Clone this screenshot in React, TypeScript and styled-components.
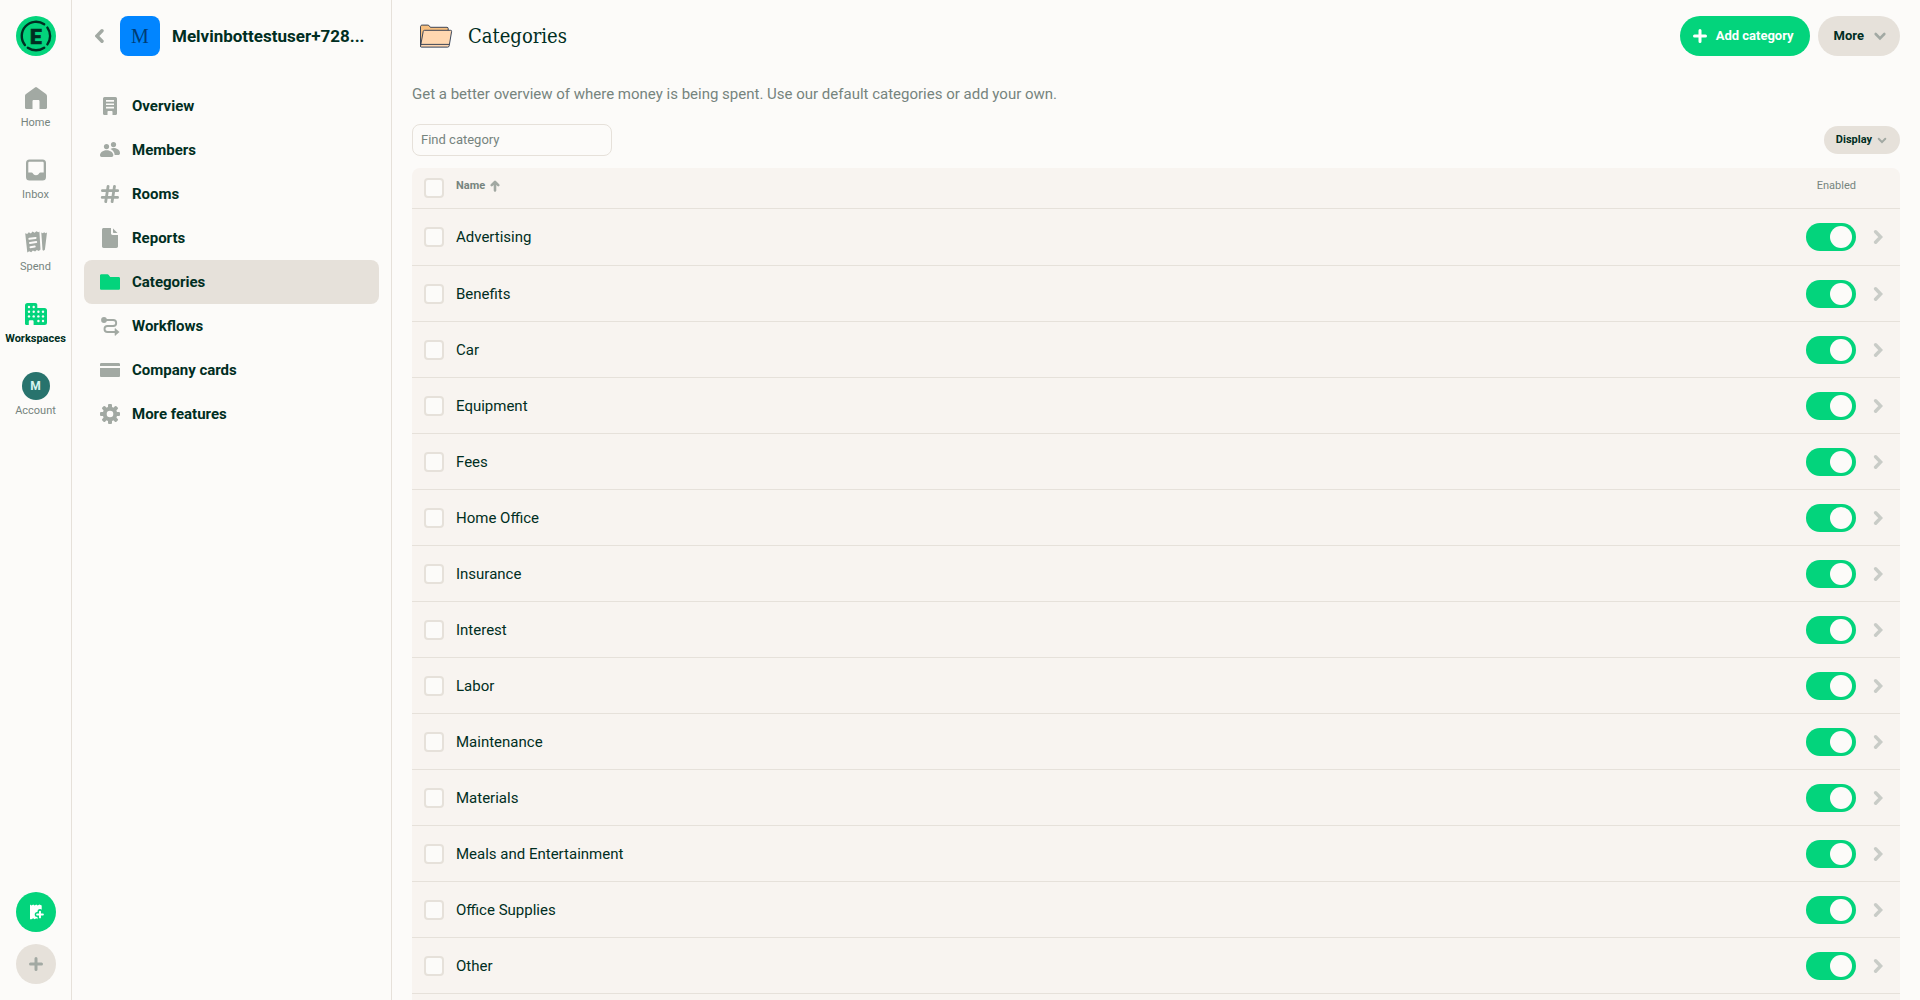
import React from "react";
import styled, { createGlobalStyle } from "styled-components";

const color = {
  app: "#fcfbf9",
  panel: "#f8f4f0",
  border: "#e6e1da",
  text: "#002e22",
  muted: "#76847e",
  icon: "#a2a9a3",
  green: "#03d47c",
};

const GlobalStyle = createGlobalStyle`
  *, *::before, *::after { box-sizing: border-box; }
  body {
    margin: 0;
    background: ${color.app};
    color: ${color.text};
    font-family: Roboto, "Liberation Sans", sans-serif;
    font-size: 15px;
    line-height: 20px;
  }
  a { color: inherit; text-decoration: none; }
  button, input { font: inherit; color: inherit; }
  button { border: 0; padding: 0; background: none; cursor: pointer; }
  svg { display: block; flex: none; }
`;

const Page = styled.div`
  display: flex;
  height: 100vh;
  overflow: hidden;
`;

/* Navigation rail */
const Rail = styled.nav`
  display: flex;
  flex-direction: column;
  align-items: center;
  flex: none;
  width: 72px;
  padding: 16px 0;
  border-right: 1px solid ${color.border};
`;

const RailTabs = styled.div`
  display: flex;
  flex-direction: column;
  flex: 1;
  align-self: stretch;
  padding-top: 16px;
`;

const RailTab = styled.a<{ $active?: boolean }>`
  display: flex;
  flex-direction: column;
  align-items: center;
  gap: 3px;
  height: 72px;
  padding-top: 12px;
  font-size: 11px;
  line-height: 16px;
  font-weight: ${(p) => (p.$active ? 700 : 400)};
  color: ${(p) => (p.$active ? color.text : color.muted)};
`;

const RailIcon = styled.span<{ $active?: boolean }>`
  display: flex;
  align-items: center;
  justify-content: center;
  height: 28px;
  color: ${(p) => (p.$active ? color.green : color.icon)};
`;

const UserAvatar = styled.span`
  display: flex;
  align-items: center;
  justify-content: center;
  width: 28px;
  height: 28px;
  border-radius: 50%;
  background: #28736d;
  color: #d6f5f0;
  font-size: 12px;
  font-weight: 700;
`;

const RailActions = styled.div`
  display: flex;
  flex-direction: column;
  gap: 12px;
`;

const RoundButton = styled.button<{ $primary?: boolean }>`
  display: flex;
  align-items: center;
  justify-content: center;
  width: 40px;
  height: 40px;
  border-radius: 50%;
  background: ${(p) => (p.$primary ? color.green : color.border)};
  color: ${(p) => (p.$primary ? "#fff" : color.icon)};
`;

/* Workspace sidebar */
const Sidebar = styled.aside`
  flex: none;
  width: 320px;
  border-right: 1px solid ${color.border};
`;

const SidebarHeader = styled.header`
  display: flex;
  align-items: center;
  gap: 12px;
  height: 72px;
  padding: 0 24px 0 20px;
`;

const BackButton = styled.button`
  display: flex;
  align-items: center;
  justify-content: center;
  flex: none;
  width: 16px;
  height: 40px;
  color: ${color.icon};
`;

const WorkspaceAvatar = styled.span`
  display: flex;
  align-items: center;
  justify-content: center;
  flex: none;
  width: 40px;
  height: 40px;
  border-radius: 8px;
  background: #0185ff;
  color: #003c73;
  font-family: "Liberation Serif", serif;
  font-size: 20px;
`;

const WorkspaceName = styled.span`
  font-size: 17px;
  font-weight: 700;
  white-space: nowrap;
`;

const Menu = styled.nav`
  display: flex;
  flex-direction: column;
  padding: 12px;
`;

const MenuItem = styled.a<{ $active?: boolean }>`
  display: flex;
  align-items: center;
  gap: 12px;
  height: 44px;
  padding: 0 16px;
  border-radius: 8px;
  font-weight: 700;
  background: ${(p) => (p.$active ? color.border : "transparent")};

  svg { color: ${(p) => (p.$active ? color.green : color.icon)}; }
`;

/* Main content */
const Main = styled.main`
  display: flex;
  flex: 1;
  flex-direction: column;
  min-width: 0;
  padding: 0 20px;
`;

const MainHeader = styled.header`
  display: flex;
  align-items: center;
  gap: 8px;
  flex: none;
  height: 72px;
`;

const Title = styled.h1`
  flex: 1;
  margin: 0;
  font-family: "DejaVu Serif Condensed", "Liberation Serif", serif;
  font-size: 20px;
  line-height: 24px;
  font-weight: 400;
`;

const PillButton = styled.button<{ $primary?: boolean }>`
  display: flex;
  align-items: center;
  justify-content: center;
  gap: 8px;
  height: 40px;
  padding: ${(p) => (p.$primary ? "0 16px 0 12px" : "0 12px 0 16px")};
  border-radius: 20px;
  font-size: 13px;
  font-weight: 700;
  background: ${(p) => (p.$primary ? color.green : color.border)};
  color: ${(p) => (p.$primary ? "#fff" : color.text)};

  svg { color: ${(p) => (p.$primary ? "#fff" : color.icon)}; }
`;

const SmallPillButton = styled(PillButton)`
  gap: 4px;
  height: 28px;
  padding: 0 12px;
  font-size: 11px;
`;

const Subtitle = styled.p`
  margin: 12px 0 20px;
  color: ${color.muted};
`;

const Toolbar = styled.div`
  display: flex;
  align-items: center;
  justify-content: space-between;
  margin-bottom: 12px;
`;

const SearchInput = styled.input`
  width: 200px;
  height: 32px;
  padding: 0 8px 2px;
  border: 1px solid ${color.border};
  border-radius: 8px;
  background: ${color.app};
  font-size: 13px;

  &::placeholder { color: ${color.muted}; opacity: 1; }
`;

const TablePanel = styled.div`
  flex: 1;
  overflow: hidden;
  border-radius: 8px 8px 0 0;
  background: ${color.panel};
`;

const Table = styled.table`
  width: 100%;
  border-collapse: separate;
  border-spacing: 0;
  table-layout: fixed;
`;

const HeadCell = styled.th<{ $width?: number; $align?: string }>`
  width: ${(p) => (p.$width ? `${p.$width}px` : "auto")};
  height: 41px;
  padding: 0;
  border-bottom: 1px solid ${color.border};
  color: ${color.muted};
  font-size: 11px;
  line-height: 16px;
  font-weight: ${(p) => (p.$align === "right" ? 400 : 700)};
  text-align: ${(p) => p.$align ?? "left"};
`;

const HeadLabel = styled.span`
  display: block;
  padding-bottom: 4px;
`;

const SortButton = styled.button`
  display: flex;
  align-items: center;
  gap: 4px;
  padding-bottom: 4px;
`;

const Row = styled.tr`
  height: 56px;

  &:first-child { height: 57px; }
`;

const Cell = styled.td`
  padding: 0;
  border-bottom: 1px solid ${color.border};
`;

const Checkbox = styled.input`
  display: block;
  appearance: none;
  width: 20px;
  height: 20px;
  margin: 0 12px;
  border: 2px solid ${color.border};
  border-radius: 4px;
  background: ${color.app};
`;

const Switch = styled.input`
  display: flex;
  align-items: center;
  appearance: none;
  width: 50px;
  height: 28px;
  margin: 0 0 0 auto;
  padding: 0 4px;
  border-radius: 14px;
  background: ${color.icon};

  &::before {
    content: "";
    width: 22px;
    height: 22px;
    border-radius: 50%;
    background: ${color.app};
  }

  &:checked { justify-content: flex-end; background: ${color.green}; }
`;

const RowLink = styled.a`
  display: flex;
  justify-content: center;
  color: #c9ccc7;
`;

/* Icons */
const Logo = () => (
  <svg width="40" height="40" viewBox="0 0 40 40" role="img" aria-label="Expensify">
    <circle cx="20" cy="20" r="20" fill={color.green} />
    <g fill="none" stroke={color.text} strokeWidth="2.4" strokeLinecap="round">
      <path d="M31.4 11.6A14.3 14.3 0 0 1 31.4 28.4" />
      <path d="M28.2 31.7A14.3 14.3 0 0 1 11.8 31.7" />
      <path d="M8.9 29A14.3 14.3 0 0 1 28.2 8.3" />
    </g>
    <text
      x="20"
      y="27.5"
      textAnchor="middle"
      fontFamily="Roboto, sans-serif"
      fontWeight="900"
      fontSize="21"
      fill={color.text}
      stroke={color.text}
      strokeWidth="0.6"
    >
      E
    </text>
  </svg>
);

const Chevron = ({ w, h, d, sw = 3.4 }: { w: number; h: number; d: string; sw?: number }) => (
  <svg width={w} height={h} viewBox={`0 0 ${w} ${h}`} fill="none" stroke="currentColor" strokeWidth={sw} strokeLinecap="round" strokeLinejoin="miter" aria-hidden="true">
    <path d={d} />
  </svg>
);
const ChevronLeft = () => <Chevron w={10} h={16} d="M7 2.700 1.900 8l5.100 5.300" />;
const ChevronRight = () => <Chevron w={10} h={16} d="M2.600 2.700 7.700 8l-5.100 5.300" />;
const ChevronDown = () => <Chevron w={16} h={16} d="M3.700 6 8 10.400 12.300 6" sw={2.6} />;
const ChevronDownSmall = () => <Chevron w={12} h={12} d="M2.700 4.800 6 8.100l3.300-3.300" sw={2} />;

const PlusIcon = () => (
  <svg width="16" height="16" viewBox="0 0 16 16" fill="none" stroke="currentColor" strokeWidth="3" strokeLinecap="round" aria-hidden="true">
    <path d="M8 2.500v11M2.500 8h11" />
  </svg>
);

const SortArrow = () => (
  <svg width="12" height="12" viewBox="0 0 12 12" fill="none" stroke={color.icon} strokeWidth="2.6" strokeLinecap="round" strokeLinejoin="round" aria-hidden="true">
    <path d="M6 10.500V2.500M2.700 5.200 6 1.900l3.300 3.300" />
  </svg>
);

const Glyph = ({ size = 20, children }: { size?: number; children: React.ReactNode }) => (
  <svg width={size} height={size} viewBox={`0 0 ${size} ${size}`} fill="currentColor" aria-hidden="true">
    {children}
  </svg>
);

const HomeIcon = () => (
  <Glyph size={22}>
    <path d="M10 .4 1 7a2.400 2.400 0 0 0-1 2v11.800C0 21.500.5 22 1.200 22H7.500V14.200c0-.7.5-1.200 1.200-1.200h4.600c.7 0 1.200.5 1.200 1.200V22h6.300c.7 0 1.200-.5 1.200-1.200V9c0-.8-.4-1.500-1-2L12 .4a1.700 1.700 0 0 0-2 0Z" />
  </Glyph>
);

const InboxIcon = () => (
  <Glyph size={22}>
    <path fillRule="evenodd" d="M4.500.500h13a3.500 3.500 0 0 1 3.500 3.500v14a3.500 3.500 0 0 1-3.500 3.500h-13A3.500 3.500 0 0 1 1 18V4A3.500 3.500 0 0 1 4.500.500ZM4.700 2.800C3.800 2.800 3.300 3.300 3.300 4.200V13.500h3.200c.7 0 1 .3 1.300.8.6 1.200 1.700 2 3.200 2s2.600-.8 3.200-2c.3-.5.6-.8 1.300-.8h3.200V4.200c0-.9-.5-1.400-1.400-1.400H4.700Z" />
  </Glyph>
);

const SpendIcon = () => (
  <Glyph size={22}>
    <path fillRule="evenodd" d="m.2 2.200 2 .8 1.600-1.800 2.100 1.200L7.500.600l2.200 1.200L11.300.200l2.200 1.100.9-.8 1.100 17.900-1.700 1.600-2-1.100-1.700 1.700-2.200-1.100-1.700 1.800-2-1.100-1.900 1.400ZM4.300 6.800a1 1 0 0 0 .2 2l6.200-.9a1 1 0 0 0-.2-2Zm.6 4.200a1 1 0 0 0 .2 2l6.200-.9a1 1 0 0 0-.2-2Zm.5 4.200a1 1 0 0 0 .2 2l4.200-.6a1 1 0 0 0-.2-2Z" />
    <path d="m16.300 1.400 1.500.9 1.400-1 1.300 1 1.500-.7-2.100 17.200-1.400 1-1-.9Z" />
  </Glyph>
);

const dots: [number, number][] = [
  [4, 4], [8.7, 4], [4, 8.7], [8.7, 8.7], [13.4, 8.7], [18, 8.7],
  [4, 13.4], [8.7, 13.4], [13.4, 13.4], [18, 13.4], [13.4, 18], [18, 18],
];

const WorkspacesIcon = () => (
  <Glyph size={22}>
    <path d="M2.500 0h7.800c1.300 0 2 .9 2 2v3h7.200A2.500 2.500 0 0 1 22 7.500v12a2.500 2.500 0 0 1-2.500 2.500H8.600v-3.500c0-.8-.5-1.200-1.200-1.200H5c-.7 0-1.200.4-1.200 1.200V22H1.200C.5 22 0 21.500 0 20.800V2.500A2.500 2.500 0 0 1 2.500 0Z" />
    {dots.map(([x, y]) => (
      <circle key={`${x}-${y}`} cx={x} cy={y} r="1.2" fill={color.app} />
    ))}
  </Glyph>
);

const ReceiptPlusIcon = () => (
  <Glyph>
    <path d="m4 2.400 1.500 1 1.700-1 1.500 1 1.500-1 1.500 1 1.700-1 2.300 1V17.200l-2.300-.9-1.700 1-1.500-1-1.500 1-1.500-1-1.700 1L4 17.200Z" />
    <g fill="none" strokeLinecap="round">
      <path d="M14 9.500v8M11.200 12.400h6.500" stroke={color.green} strokeWidth="5" />
      <path d="M14 9.600v5.800M11.100 12.500h5.800" stroke="currentColor" strokeWidth="1.9" />
    </g>
  </Glyph>
);

const OverviewIcon = () => (
  <Glyph>
    <path fillRule="evenodd" d="M4.500 1h11A1.500 1.500 0 0 1 17 2.500v15.300c0 .7-.5 1.200-1.200 1.200H12.500v-3c0-.6-.3-1-1-1h-3c-.7 0-1 .4-1 1v3H4.200C3.500 19 3 18.500 3 17.800V2.500A1.500 1.500 0 0 1 4.500 1ZM6 4v1.700h8V4Zm0 3.400v1.700h8V7.400Zm0 3.400v1.700h8v-1.700Z" />
  </Glyph>
);

const MembersIcon = () => (
  <Glyph>
    <circle cx="6.500" cy="6.600" r="2.600" />
    <circle cx="13.500" cy="4.600" r="2.600" />
    <path d="M6.600 10.200c4 0 6.700 2.400 6.700 5.100 0 .9-.7 1.600-1.600 1.600H1.600c-.9 0-1.600-.7-1.600-1.600 0-2.700 2.700-5.100 6.600-5.100Z" />
    <path d="M10.500 9c.9-.6 2-.9 3.200-.9 3.700 0 6.300 2.300 6.300 5.100 0 1.200-.7 1.800-1.800 1.800h-3.500c-.2-2.700-1.700-4.900-4.200-6Z" />
  </Glyph>
);

const RoomsIcon = () => (
  <Glyph>
    <path d="M8.100 2.300 5.700 17.700M14.500 2.300l-2.400 15.400M2.400 6.700h15.300M2.200 13.400h15.400" fill="none" stroke="currentColor" strokeWidth="2.8" strokeLinecap="round" />
  </Glyph>
);

const ReportsIcon = () => (
  <Glyph>
    <path d="M3.700 0H11v5.300C11 6.500 11.600 7 12.700 7H18v11.300c0 1-.7 1.700-1.700 1.700H3.700C2.700 20 2 19.300 2 18.300V1.700C2 .7 2.700 0 3.700 0Z" />
    <path d="M13 .5 17.500 5H13.800a.8.800 0 0 1-.8-.8Z" />
  </Glyph>
);

const FolderIcon = () => (
  <Glyph>
    <path d="M1.300 2.300h6.200c.5 0 .9.200 1.200.6l1.500 2h8.500c.7 0 1.300.6 1.300 1.300v10.200c0 .7-.6 1.300-1.300 1.300H1.300c-.7 0-1.300-.6-1.300-1.300V3.600c0-.7.6-1.300 1.300-1.300Z" />
  </Glyph>
);

const WorkflowsIcon = () => (
  <Glyph>
    <circle cx="4" cy="4" r="2.900" />
    <path d="M4 4h9.200a2.800 2.800 0 0 1 0 6H7.500a2.800 2.800 0 0 0 0 6H16" fill="none" stroke="currentColor" strokeWidth="1.9" />
    <path d="M15 12.500v7l4.200-3.500Z" stroke="currentColor" strokeWidth=".6" strokeLinejoin="round" />
  </Glyph>
);

const CardIcon = () => (
  <Glyph>
    <path d="M1.300 3h17.400c.8 0 1.300.6 1.300 1.300V6H0V4.300C0 3.600.5 3 1.300 3ZM0 8h20v7.700c0 .7-.5 1.300-1.300 1.300H1.300C.5 17 0 16.400 0 15.700Z" />
  </Glyph>
);

const GearIcon = () => (
  <Glyph>
    <circle cx="10" cy="10" r="5.300" fill="none" stroke="currentColor" strokeWidth="4" />
    {[0, 45, 90, 135, 180, 225, 270, 315].map((angle) => (
      <rect key={angle} x="8" y="0" width="4" height="4.500" rx="1.100" transform={`rotate(${angle} 10 10)`} />
    ))}
  </Glyph>
);

const FolderIllustration = () => (
  <svg width="48" height="48" viewBox="0 0 48 48" aria-hidden="true">
    <g stroke="#27364d" strokeWidth="0.9" strokeLinejoin="round">
      <path d="M8.500 34.600V14.800c0-1 .6-1.700 1.700-1.700h5.600c.8 0 1.200.3 1.600.9l.9 1.300H35c.8 0 1.200.5 1.200 1.200V34.600Z" fill="#f8c07f" />
      <path d="M12.600 18.300h26c.8 0 1.200.5 1 1.200l-2.400 14.300c-.2.900-.7 1.300-1.600 1.300H9.600c-.8 0-1.200-.5-1-1.300l2.600-14.300c.1-.8.600-1.200 1.400-1.200Z" fill="#ffd7b0" />
      <path d="M9 32.400H37" fill="none" />
    </g>
  </svg>
);

const railTabs = [
  { label: "Home", icon: <HomeIcon /> },
  { label: "Inbox", icon: <InboxIcon /> },
  { label: "Spend", icon: <SpendIcon /> },
  { label: "Workspaces", icon: <WorkspacesIcon />, active: true },
  { label: "Account", icon: <UserAvatar>M</UserAvatar> },
];

const menuItems = [
  { label: "Overview", icon: <OverviewIcon /> },
  { label: "Members", icon: <MembersIcon /> },
  { label: "Rooms", icon: <RoomsIcon /> },
  { label: "Reports", icon: <ReportsIcon /> },
  { label: "Categories", icon: <FolderIcon />, active: true },
  { label: "Workflows", icon: <WorkflowsIcon /> },
  { label: "Company cards", icon: <CardIcon /> },
  { label: "More features", icon: <GearIcon /> },
];

const categories = [
  "Advertising", "Benefits", "Car", "Equipment", "Fees", "Home Office", "Insurance",
  "Interest", "Labor", "Maintenance", "Materials", "Meals and Entertainment",
  "Office Supplies", "Other",
];

export default function App() {
  return (
    <>
      <GlobalStyle />
      <Page>
        <Rail>
          <Logo />
          <RailTabs>
            {railTabs.map((tab) => (
              <RailTab key={tab.label} href="#" $active={tab.active}>
                <RailIcon $active={tab.active}>{tab.icon}</RailIcon>
                {tab.label}
              </RailTab>
            ))}
          </RailTabs>
          <RailActions>
            <RoundButton $primary aria-label="Create expense"><ReceiptPlusIcon /></RoundButton>
            <RoundButton aria-label="Create"><PlusIcon /></RoundButton>
          </RailActions>
        </Rail>

        <Sidebar>
          <SidebarHeader>
            <BackButton aria-label="Back"><ChevronLeft /></BackButton>
            <WorkspaceAvatar>M</WorkspaceAvatar>
            <WorkspaceName>Melvinbottestuser+728...</WorkspaceName>
          </SidebarHeader>
          <Menu>
            {menuItems.map((item) => (
              <MenuItem key={item.label} href="#" $active={item.active}>
                {item.icon}
                {item.label}
              </MenuItem>
            ))}
          </Menu>
        </Sidebar>

        <Main>
          <MainHeader>
            <FolderIllustration />
            <Title>Categories</Title>
            <PillButton $primary><PlusIcon />Add category</PillButton>
            <PillButton>More<ChevronDown /></PillButton>
          </MainHeader>
          <Subtitle>
            Get a better overview of where money is being spent. Use our default categories or add your own.
          </Subtitle>
          <Toolbar>
            <SearchInput type="text" placeholder="Find category" aria-label="Find category" />
            <SmallPillButton>Display<ChevronDownSmall /></SmallPillButton>
          </Toolbar>
          <TablePanel>
            <Table>
              <thead>
                <tr>
                  <HeadCell $width={44}><Checkbox type="checkbox" aria-label="Select all" /></HeadCell>
                  <HeadCell><SortButton>Name<SortArrow /></SortButton></HeadCell>
                  <HeadCell $width={100} $align="right"><HeadLabel>Enabled</HeadLabel></HeadCell>
                  <HeadCell $width={44} />
                </tr>
              </thead>
              <tbody>
                {categories.map((name) => (
                  <Row key={name}>
                    <Cell><Checkbox type="checkbox" aria-label={`Select ${name}`} /></Cell>
                    <Cell>{name}</Cell>
                    <Cell><Switch type="checkbox" role="switch" defaultChecked aria-label={`Enable ${name}`} /></Cell>
                    <Cell><RowLink href="#" aria-label={`Open ${name}`}><ChevronRight /></RowLink></Cell>
                  </Row>
                ))}
              </tbody>
            </Table>
          </TablePanel>
        </Main>
      </Page>
    </>
  );
}
